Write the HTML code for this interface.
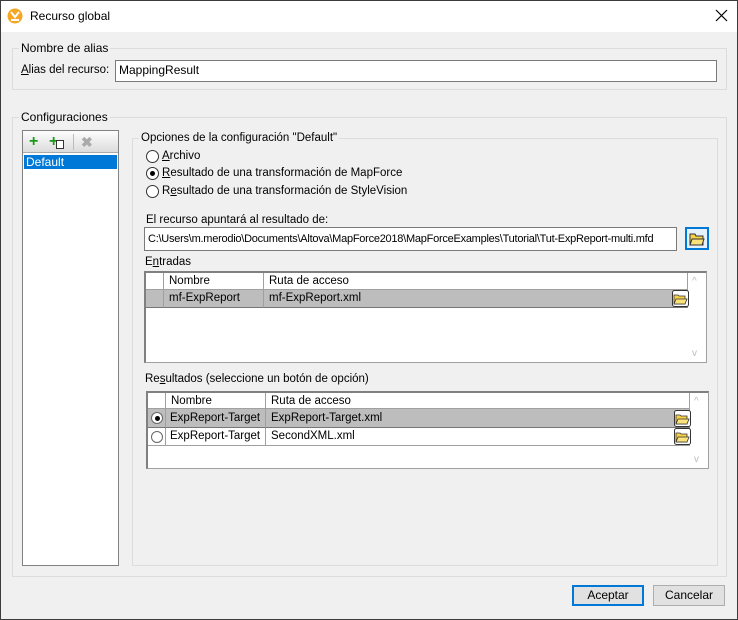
<!DOCTYPE html>
<html><head><meta charset="utf-8"><style>
*{box-sizing:border-box;margin:0;padding:0}
body{width:738px;height:620px;position:relative;background:#f0f0f0;font-family:"Liberation Sans",sans-serif;font-size:12px;color:#000;overflow:hidden}
.a{position:absolute;white-space:nowrap}
.win{position:absolute;left:0;top:0;width:738px;height:620px;border:1px solid #3c3c3c}
.grp{position:absolute;border:1px solid #dcdcdc}
.lbl{position:absolute;background:#f0f0f0;padding:0 2px;line-height:13px;white-space:nowrap}
.inp{position:absolute;background:#fff;border:1px solid #7a7a7a;padding-left:3px;line-height:19px;white-space:nowrap;overflow:hidden}
.rad{position:absolute;width:13px;height:13px;border:1px solid #333;border-radius:50%;background:#fff}
.rad.on::after{content:"";position:absolute;left:3px;top:3px;width:5px;height:5px;border-radius:50%;background:#000}
.tbl{position:absolute;background:#fff;border:1px solid #a0a0a0;border-top:2px solid #808080;border-left:2px solid #808080}
.cell{position:absolute;border-right:1px solid #a0a0a0;border-bottom:1px solid #a0a0a0;padding-left:5px;line-height:17px;white-space:nowrap;overflow:hidden;font-size:11.5px}
.btn{position:absolute;height:21px;border:1px solid #adadad;background:#e1e1e1;text-align:center;line-height:19px}
u{text-decoration:underline}
</style></head><body>
<div class="a" style="left:0;top:0;width:738px;height:32px;background:#fff"></div>
<svg class="a" style="left:7px;top:8px" width="16" height="16"><circle cx="8" cy="8" r="7.5" fill="#f5a623"/><path d="M4 4 L8 9 L12 4 M4 12 h8" stroke="#fff" stroke-width="2" fill="none"/></svg>
<div class="a" style="left:30px;top:9px;font-size:12px">Recurso global</div>
<svg class="a" style="left:715px;top:9px" width="13" height="13"><path d="M1 1L12 12M12 1L1 12" stroke="#000" stroke-width="1.2"/></svg>
<div class="win"></div>

<div class="grp" style="left:12px;top:48px;width:715px;height:42px"></div>
<div class="lbl" style="left:19px;top:42px">Nombre de alias</div>
<div class="a" style="left:21px;top:64px;font-size:11.5px"><u>A</u>lias del recurso:</div>
<div class="inp" style="left:115px;top:60px;width:602px;height:22px">MappingResult</div>

<div class="grp" style="left:12px;top:117px;width:715px;height:460px"></div>
<div class="lbl" style="left:19px;top:111px">Configuraciones</div>

<div class="a" style="left:22px;top:130px;width:97px;height:436px;background:#fff;border:1px solid #828282"></div>
<div class="a" style="left:23px;top:131px;width:95px;height:22px;background:linear-gradient(#fdfdfd,#dcdcdc);border-bottom:1px solid #aaa"></div>
<div class="a" style="left:29px;top:134px;color:#1a9a1a;font-weight:bold;font-size:16px;line-height:16px">+</div>
<div class="a" style="left:49px;top:134px;color:#1a9a1a;font-weight:bold;font-size:16px;line-height:16px">+</div>
<div class="a" style="left:56px;top:140px;width:8px;height:9px;border:1px solid #333;background:#fff"></div>
<div class="a" style="left:73px;top:134px;width:1px;height:16px;background:#bbb"></div>
<div class="a" style="left:81px;top:134px;color:#aaa;font-weight:bold;font-size:14px">✖</div>
<div class="a" style="left:24px;top:155px;width:93px;height:14px;background:#0078d7;color:#fff;padding-left:2px;line-height:14px">Default</div>

<div class="grp" style="left:132px;top:138px;width:586px;height:428px"></div>
<div class="lbl" style="left:139px;top:132px;font-size:11.5px">Opciones de la configuración "Default"</div>
<div class="rad" style="left:146px;top:150px"></div><div class="a" style="left:162px;top:150px;font-size:11.5px"><u>A</u>rchivo</div>
<div class="rad on" style="left:146px;top:167px"></div><div class="a" style="left:162px;top:167px;font-size:11.5px"><u>R</u>esultado de una transformación de MapForce</div>
<div class="rad" style="left:146px;top:185px"></div><div class="a" style="left:162px;top:185px;font-size:11.5px">R<u>e</u>sultado de una transformación de StyleVision</div>
<div class="a" style="left:146px;top:214px;font-size:11.5px">El recurso apuntará al resultado de:</div>
<div class="inp" style="left:144px;top:227px;width:533px;height:24px;line-height:22px;font-size:11px;letter-spacing:-0.25px">C:\Users\m.merodio\Documents\Altova\MapForce2018\MapForceExamples\Tutorial\Tut-ExpReport-multi.mfd</div>
<div class="a" style="left:685px;top:227px;width:24px;height:23px;border:2px solid #0078d7;background:#e5f1fb"></div>
<svg class="a" style="left:689px;top:231px" width="16" height="15"><path d="M1 3h5l1 2h7v9H1z" fill="#f7d04a" stroke="#333"/><path d="M3 8h12l-2 6H1z" fill="#fbe27a" stroke="#333"/></svg>

<div class="a" style="left:145px;top:256px;font-size:11.5px">E<u>n</u>tradas</div>
<div class="tbl" style="left:144px;top:271px;width:563px;height:92px"></div>
<div class="cell" style="left:146px;top:273px;width:18px;height:17px"></div>
<div class="cell" style="left:164px;top:273px;width:100px;height:17px">Nombre</div>
<div class="cell" style="left:264px;top:273px;width:424px;height:17px">Ruta de acceso</div>
<div class="cell" style="left:146px;top:290px;width:18px;height:18px;background:#bdbdbd;border-bottom:1px solid #777"></div>
<div class="cell" style="left:164px;top:290px;width:100px;height:18px;background:#bdbdbd;border-bottom:1px solid #777">mf-ExpReport</div>
<div class="cell" style="left:264px;top:290px;width:424px;height:18px;background:#bdbdbd;border-bottom:1px solid #777">mf-ExpReport.xml</div>
<svg class="a" style="left:672px;top:290px" width="17" height="17"><rect x=".5" y=".5" width="16" height="16" rx="2" fill="#fff" stroke="#333"/><path d="M2 5h4l1 1h6v8H2z" fill="#f7d04a" stroke="#333" stroke-width=".8"/><path d="M4 9h11l-2 5H2z" fill="#fbe27a" stroke="#333" stroke-width=".8"/></svg>
<div class="a" style="left:692px;top:276px;color:#bbb;font-size:10px">^</div>
<div class="a" style="left:692px;top:348px;color:#bbb;font-size:10px">v</div>

<div class="a" style="left:145px;top:373px;font-size:11.5px">Re<u>s</u>ultados (seleccione un botón de opción)</div>
<div class="tbl" style="left:146px;top:391px;width:563px;height:78px"></div>
<div class="cell" style="left:148px;top:393px;width:18px;height:16px"></div>
<div class="cell" style="left:166px;top:393px;width:100px;height:16px">Nombre</div>
<div class="cell" style="left:266px;top:393px;width:424px;height:16px">Ruta de acceso</div>
<div class="cell" style="left:148px;top:409px;width:18px;height:19px;background:#bdbdbd;border-bottom:1px solid #777"></div>
<div class="cell" style="left:166px;top:409px;width:100px;height:19px;background:#bdbdbd;border-bottom:1px solid #777;line-height:18px;padding-left:4px">ExpReport-Target</div>
<div class="cell" style="left:266px;top:409px;width:424px;height:19px;background:#bdbdbd;border-bottom:1px solid #777;line-height:18px">ExpReport-Target.xml</div>
<div class="rad on" style="left:151px;top:412px;width:12px;height:12px;border-color:#666"></div>
<div class="cell" style="left:148px;top:428px;width:18px;height:18px"></div>
<div class="cell" style="left:166px;top:428px;width:100px;height:18px;padding-left:4px">ExpReport-Target</div>
<div class="cell" style="left:266px;top:428px;width:424px;height:18px">SecondXML.xml</div>
<div class="rad" style="left:151px;top:431px;width:12px;height:12px;border-color:#666"></div>
<svg class="a" style="left:674px;top:410px" width="17" height="17"><rect x=".5" y=".5" width="16" height="16" rx="2" fill="#fff" stroke="#333"/><path d="M2 5h4l1 1h6v8H2z" fill="#f7d04a" stroke="#333" stroke-width=".8"/><path d="M4 9h11l-2 5H2z" fill="#fbe27a" stroke="#333" stroke-width=".8"/></svg>
<svg class="a" style="left:674px;top:428px" width="17" height="17"><rect x=".5" y=".5" width="16" height="16" rx="2" fill="#fff" stroke="#333"/><path d="M2 5h4l1 1h6v8H2z" fill="#f7d04a" stroke="#333" stroke-width=".8"/><path d="M4 9h11l-2 5H2z" fill="#fbe27a" stroke="#333" stroke-width=".8"/></svg>
<div class="a" style="left:694px;top:396px;color:#bbb;font-size:10px">^</div>
<div class="a" style="left:694px;top:454px;color:#bbb;font-size:10px">v</div>

<div class="btn" style="left:572px;top:585px;width:72px;border:2px solid #0078d7;line-height:17px">Aceptar</div>
<div class="btn" style="left:653px;top:585px;width:72px">Cancelar</div>
</body></html>
